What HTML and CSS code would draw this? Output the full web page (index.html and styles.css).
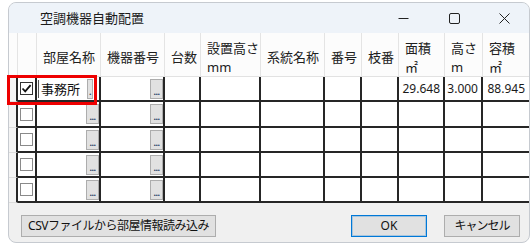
FILE: index.html
```html
<!DOCTYPE html>
<html lang="ja">
<head>
  <meta charset="UTF-8" />
  <title>空調機器自動配置</title>
  <link rel="stylesheet" href="styles.css">
</head>
<body>

<div class="window">
  <div class="titlebar">
    <span class="title">空調機器自動配置</span>
    <div class="controls">
      <span class="ctl"><svg width="11" height="11" viewBox="0 0 11 11"><path d="M0.5 5.5H10.5" stroke="#222" stroke-width="1"/></svg></span>
      <span class="ctl"><svg width="11" height="11" viewBox="0 0 11 11"><rect x="0.5" y="0.5" width="10" height="10" rx="1.5" fill="none" stroke="#222" stroke-width="1"/></svg></span>
      <span class="ctl close"><svg width="11" height="11" viewBox="0 0 11 11"><path d="M0.5 0.5L10.5 10.5M10.5 0.5L0.5 10.5" stroke="#222" stroke-width="1"/></svg></span>
    </div>
  </div>

  <div class="grid">
    <div class="hd"></div>
    <div class="hd"></div>
    <div class="hd">部屋名称</div>
    <div class="hd">機器番号</div>
    <div class="hd">台数</div>
    <div class="hd">設置高さ<br>mm</div>
    <div class="hd">系統名称</div>
    <div class="hd">番号</div>
    <div class="hd">枝番</div>
    <div class="hd">面積<br>㎡</div>
    <div class="hd">高さ<br>m</div>
    <div class="hd last">容積<br>㎡</div>

    <!-- row 1 (editing) -->
    <div class="rh"></div>
    <div class="cell chk"><span class="box checked"><svg width="11" height="11" viewBox="0 0 11 11"><path d="M1.5 5.5L4.2 8.3L9.6 2.2" fill="none" stroke="#111" stroke-width="1.8"/></svg></span></div>
    <div class="cell edit"><span class="edit-text">事務所</span><span class="mini">.</span></div>
    <div class="cell btn-cell"><span class="dots">...</span></div>
    <div class="cell"></div>
    <div class="cell"></div>
    <div class="cell"></div>
    <div class="cell"></div>
    <div class="cell"></div>
    <div class="cell num">29.648</div>
    <div class="cell num">3.000</div>
    <div class="cell num last">88.945</div>
  </div>

  <div class="footer">
    <button class="btn csv">CSVファイルから部屋情報読み込み</button>
    <button class="btn ok">OK</button>
    <button class="btn cancel">キャンセル</button>
  </div>

  <div class="highlight"></div>
</div>

<script>
  // rows 2-5 are empty, build them the same way
  const grid = document.querySelector(".grid");
  for (let i = 0; i < 4; i++) {
    let html = '<div class="rh"></div>';
    html += '<div class="cell chk"><span class="box"></span></div>';
    html += '<div class="cell btn-cell"><span class="dots">...</span></div>';
    html += '<div class="cell btn-cell"><span class="dots">...</span></div>';
    for (let c = 0; c < 8; c++) {
      html += '<div class="cell' + (c === 7 ? ' last' : '') + '"></div>';
    }
    grid.insertAdjacentHTML("beforeend", html);
  }
</script>

</body>
</html>
```

FILE: styles.css
```css
body {
  margin: 0;
  background: #ffffff;
  font-family: "Noto Sans", "Noto Sans CJK JP", sans-serif;
  color: #1a1a1a;
}
.window {
  position: relative;
  margin: 2px 0 0 8px;
  width: 522px;
  height: 241px;
  box-sizing: border-box;
  border: 1px solid #c6cad0;
  border-radius: 8px;
  background: #f0f0f0;
  display: flex;
  flex-direction: column;
}
.titlebar {
  height: 30px;
  flex: none;
  display: flex;
  align-items: center;
  background: #eef3f9;
  border-radius: 7px 7px 0 0;
}
.title {
  margin-left: 31px;
  font-size: 13px;
  line-height: 16px;
  color: #1b1b1b;
}
.controls {
  margin-left: auto;
  display: flex;
}
.ctl {
  width: 51px;
  height: 30px;
  display: flex;
  align-items: center;
  justify-content: center;
}
.ctl.close {
  width: 49px;
}
.grid {
  flex: none;
  display: grid;
  grid-template-columns: 9px 19px 64px 64px 36px 60px 64px 37px 37px 46px 38px 46px;
  grid-template-rows: 44px 25px 26px 25px 25px 25px;
  background: #ffffff;
}
.hd {
  box-sizing: border-box;
  border-right: 1px solid #e4e4e4;
  border-bottom: 1px solid #e2e2e2;
  background: #fcfcfc;
  display: flex;
  align-items: center;
  padding: 6px 0 0 6px;
  font-size: 13px;
  line-height: 19px;
  color: #202020;
  white-space: nowrap;
}
.hd.last {
  border-right: none;
}
.rh {
  box-sizing: border-box;
  background: #f4f4f4;
  border-bottom: 1px solid #dcdcdc;
  border-right: 2px solid #262626;
}
.cell {
  box-sizing: border-box;
  border-right: 2px solid #262626;
  border-bottom: 2px solid #262626;
  display: flex;
  align-items: center;
  font-size: 12px;
  line-height: 16px;
  color: #1a1a1a;
  min-width: 0;
}
.cell.last {
  border-right: none;
}
.chk {
  justify-content: center;
}
.box {
  width: 13px;
  height: 13px;
  box-sizing: border-box;
  border: 1px solid #8a8a8a;
  background: #ffffff;
  display: flex;
  align-items: center;
  justify-content: center;
}
.box.checked {
  border-color: #333333;
}
.btn-cell {
  justify-content: flex-end;
}
.dots, .mini {
  width: 13px;
  height: 20px;
  box-sizing: border-box;
  border: 1px solid #adadad;
  background: #e1e1e1;
  display: flex;
  align-items: flex-end;
  justify-content: center;
  font-size: 9px;
  line-height: 12px;
  letter-spacing: -0.5px;
  color: #2b3f66;
  font-weight: bold;
}
.edit {
  padding-left: 1px;
}
.edit-text {
  flex: 1;
  border-left: 1px solid #555555;
  padding-left: 2px;
  font-size: 13px;
  line-height: 18px;
  color: #111111;
}
.mini {
  width: 6px;
  margin-right: 6px;
}
.num {
  justify-content: flex-end;
  padding-right: 3px;
}
.num.last {
  padding-right: 4px;
}
.footer {
  flex: 1;
  display: flex;
  align-items: flex-start;
  padding: 12px 9px 0 12px;
  border-radius: 0 0 7px 7px;
}
.btn {
  height: 22px;
  box-sizing: border-box;
  border: 1px solid #adadad;
  background: #e1e1e1;
  font-family: "Noto Sans", "Noto Sans CJK JP", sans-serif;
  font-size: 12px;
  line-height: 16px;
  color: #111111;
  padding: 0;
}
.csv {
  width: 195px;
  letter-spacing: -0.5px;
}
.ok {
  width: 76px;
  margin-left: auto;
  border-color: #0078d7;
  box-shadow: inset 0 0 0 1px rgba(0, 120, 215, 0.25);
}
.cancel {
  width: 76px;
  margin-left: 17px;
  letter-spacing: -1px;
}
.highlight {
  position: absolute;
  left: -2px;
  top: 72px;
  width: 90px;
  height: 30px;
  box-sizing: border-box;
  border: 3px solid #ee0000;
}
```
